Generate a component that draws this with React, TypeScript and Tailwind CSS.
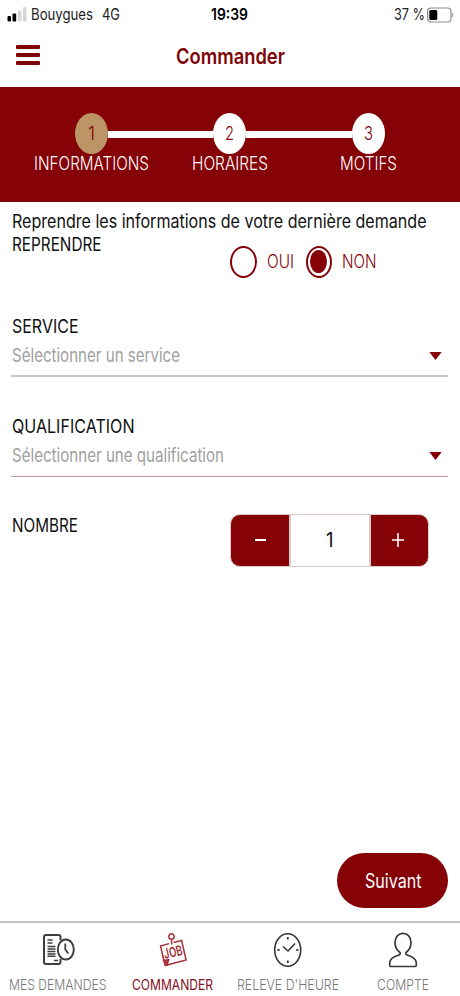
import { useLayoutEffect, useRef, useState } from 'react';

type FitProps = { children: string; w: number; className?: string };

/** Condensed single-line label: squeezes its text horizontally into a box of w pixels. */
function Fit({ children, w, className = '' }: FitProps) {
  const ref = useRef<HTMLSpanElement>(null);
  const [scale, setScale] = useState(1);
  useLayoutEffect(() => {
    if (ref.current) setScale((w - 1) / parseFloat(getComputedStyle(ref.current).width));
  }, [w, children]);
  return (
    <span className={`block shrink-0 pl-[0.5px] ${className}`} style={{ width: w }}>
      <span ref={ref} className="block w-max origin-left whitespace-nowrap" style={{ transform: `scaleX(${scale})` }}>
        {children}
      </span>
    </span>
  );
}

function StatusBar() {
  return (
    <div className="flex h-[29px] items-center pl-[7px] text-[16px] leading-[29px] text-[#222]">
      <svg className="h-[15px] w-[20px] shrink-0" viewBox="0 0 20 15">
        <rect x="0.5" y="9" width="3.5" height="5.5" rx="1" fill="#000" />
        <rect x="5.5" y="6.5" width="3.7" height="8" rx="1" fill="#000" />
        <rect x="11" y="3.5" width="3.5" height="11" rx="1" fill="#d5d5d5" />
        <rect x="16" y="0" width="3.5" height="14.5" rx="1" fill="#d5d5d5" />
      </svg>
      <Fit w={63} className="ml-[3px]">Bouygues</Fit>
      <Fit w={19} className="ml-[8.5px]">4G</Fit>
      <Fit w={38} className="ml-[90px] font-semibold text-black">19:39</Fit>
      <Fit w={32} className="ml-[144.5px]">37 %</Fit>
      <svg className="ml-[1px] h-[16px] w-[28px] shrink-0" viewBox="0 0 28 16">
        <rect x="1.6" y="1" width="23.4" height="14" rx="3.5" fill="none" stroke="#8c8c8c" strokeWidth="1.2" />
        <rect x="3.3" y="3" width="8" height="10" rx="1.5" fill="#000" />
        <path d="M26.3 5.5c1.4.8 1.4 4.2 0 5z" fill="#8c8c8c" />
      </svg>
    </div>
  );
}

function Header() {
  return (
    <header className="flex h-[58px] items-start pl-4 text-[#7f0408]">
      <button aria-label="Menu" className="mt-[16px] flex w-[24px] flex-col gap-1">
        <span className="h-1 w-full rounded-[1px] bg-[#7f0408]" />
        <span className="h-1 w-full rounded-[1px] bg-[#7f0408]" />
        <span className="h-1 w-full rounded-[1px] bg-[#7f0408]" />
      </button>
      <h1 className="ml-[135px] text-[22px] leading-[54px] font-semibold">
        <Fit w={110}>Commander</Fit>
      </h1>
    </header>
  );
}

const steps = [
  { n: '1', label: 'INFORMATIONS', w: 116, active: true },
  { n: '2', label: 'HORAIRES', w: 77, active: false },
  { n: '3', label: 'MOTIFS', w: 58, active: false },
];

function Stepper() {
  return (
    <div className="grid h-[115px] grid-cols-[138px_139px_138px] bg-[#850206] pt-[26px] pl-[22px]">
      {steps.map((s, i) => (
        <div key={s.n} className="flex flex-col items-center">
          <div className="flex w-full items-center">
            <span className={`mt-px h-[7px] flex-1 ${i > 0 ? 'bg-white' : ''}`} />
            <span
              className={`flex h-[41px] w-[33px] items-center justify-center rounded-[50%] pt-px text-[19px] font-light text-[#850206] ${
                s.active ? 'bg-[#bd9466]' : 'bg-white'
              }`}
            >
              <Fit w={s.n === '1' ? 8 : 10}>{s.n}</Fit>
            </span>
            <span className={`mt-px h-[7px] flex-1 ${i < 2 ? 'bg-white' : ''}`} />
          </div>
          <Fit w={s.w} className="text-[18.5px] leading-[18px] font-light text-white">{s.label}</Fit>
        </div>
      ))}
    </div>
  );
}

function Select({ label, w, placeholder, pw, line }: { label: string; w: number; placeholder: string; pw: number; line: string }) {
  return (
    <div className={`h-[61px] ${line}`}>
      <Fit w={w} className="text-[19px] leading-[21px] text-[#111]">{label}</Fit>
      <div className="mt-[8px] flex items-center justify-between pr-[6px] text-[18.5px] leading-[21px] text-[#a0a0a0]">
        <Fit w={pw}>{placeholder}</Fit>
        <svg className="h-[8px] w-[13px]" viewBox="0 0 13 8">
          <path d="M0.3 0h12.4L6.5 8z" fill="#850206" />
        </svg>
      </div>
    </div>
  );
}

function Form() {
  return (
    <main className="flex h-[719px] flex-col pr-[12px] pl-[11px] text-[#111]">
      <Fit w={415.5} className="mt-[9px] text-[18.5px] leading-[21px]">Reprendre les informations de votre dernière demande</Fit>
      <div className="flex h-[46px] items-start">
        <Fit w={90.5} className="mt-[2px] text-[18px] leading-[21px]">REPRENDRE</Fit>
        <div className="mt-[13px] ml-[128px] flex items-center text-[18px] leading-[32px] font-light text-[#850206]">
          <span className="h-[32px] w-[27px] rounded-[50%] border-[2.5px] border-[#850206]" />
          <Fit w={28} className="ml-[10px] pt-px">OUI</Fit>
          <span className="ml-[11px] flex h-[32px] w-[26px] items-center justify-center rounded-[50%] border-[2.5px] border-[#850206]">
            <span className="h-[23px] w-[17px] rounded-[50%] bg-[#850206]" />
          </span>
          <Fit w={35.5} className="ml-[10px] pt-px">NON</Fit>
        </div>
      </div>
      <div className="mt-[38px]">
        <Select label="SERVICE" w={67.5} placeholder="Sélectionner un service" pw={169} line="border-b-2 border-[#c6c6c6]" />
      </div>
      <div className="mt-[39px]">
        <Select label="QUALIFICATION" w={123.5} placeholder="Sélectionner une qualification" pw={213} line="border-b border-[#b9999d]" />
      </div>
      <div className="mt-[37px] flex items-start">
        <Fit w={67} className="mt-[1px] text-[18.5px] leading-[21px]">NOMBRE</Fit>
        <div className="ml-[152px] flex h-[53px] w-[199px] overflow-hidden rounded-[10px] border border-[#ddc9ca] bg-[#850206]">
          <button className="flex w-[58px] items-center justify-center" aria-label="Moins">
            <span className="mb-px h-[2px] w-[11px] bg-white" />
          </button>
          <span className="flex w-[82px] items-center justify-center border-x-2 border-[#d5cccc] bg-white pr-px text-[19.5px]">
            <Fit w={8.5}>1</Fit>
          </span>
          <button className="flex flex-1 items-center justify-center pr-[3px] pb-px" aria-label="Plus">
            <svg className="h-[14px] w-[12px]" viewBox="0 0 12 14">
              <path d="M6 0v14M0 7h12" stroke="#fff" strokeWidth="1.6" />
            </svg>
          </button>
        </div>
      </div>
      <button className="mt-auto mb-[13px] flex h-[55px] w-[111px] items-center justify-center self-end rounded-[28px] bg-[#850206] pt-[3px] pl-px text-[19.5px] text-white">
        <Fit w={57.5}>Suivant</Fit>
      </button>
    </main>
  );
}

function RequestsIcon() {
  return (
    <svg className="h-[34px] w-[34px]" viewBox="0 0 34 34" fill="none" stroke="#3d3d3d">
      <path d="M19.5 7V4q0-2-2-2H5Q3 2 3 4v25q0 2 2 2h12.5q2 0 2-2v-3" strokeWidth="2" />
      <path d="M6.5 7h5M6.5 10h5M6.5 13.5h8M6.5 16h8M6.5 18.5h8M6.5 21h8M6.5 23.2h8M13 27.5h4" strokeWidth="1.5" />
      <ellipse cx="24.8" cy="16.5" rx="8" ry="10" strokeWidth="1.9" />
      <path d="M24.3 10.5v6l3 4" strokeWidth="1.8" />
    </svg>
  );
}

function JobIcon() {
  return (
    <svg className="h-[36px] w-[30px] overflow-visible" viewBox="0 0 30 36" fill="none" stroke="#a8323a" strokeWidth="1.5">
      <ellipse cx="13.5" cy="4.5" rx="2.6" ry="2.8" />
      <path d="M13.5 7.5l.3 5" />
      <path d="M11 11.600L2.500 14l4.600 19.500 21-5.500L23.600 8.500l-8 2.100" />
      <path d="M5.700 28.500l5-.8-1.600 5z" fill="#a8323a" />
      <g transform="rotate(-13 15 20) translate(15 25) scale(0.68 1)">
        <text x="0" y="0" textAnchor="middle" fontSize="14" fontWeight="600" fill="#a8323a" stroke="none">JOB</text>
      </g>
    </svg>
  );
}

function ClockIcon() {
  return (
    <svg className="h-[36px] w-[30px]" viewBox="0 0 30 36" fill="none" stroke="#333" strokeWidth="1.6">
      <ellipse cx="14.7" cy="18" rx="13" ry="16.2" />
      <path d="M10 14.5l5 4.5 7-7.5" />
      <path d="M14.8 5v2.5M14.8 28.5v2.5M4.500 18h2M23.300 18h2" strokeWidth="1.8" />
    </svg>
  );
}

function AccountIcon() {
  return (
    <svg className="h-[36px] w-[30px]" viewBox="0 0 30 36" fill="none" stroke="#3a3a3a" strokeWidth="1.7" strokeLinejoin="round">
      <path d="M12 20.500C8.500 18 7 14.500 7 10.500 7 5 10.500 1.300 15 1.300S23 5 23 10.500c0 4-1.500 7.500-5 10-.8 1.700.3 2.300 2.500 3 4.500 1.500 7.500 3.500 7.800 7v2.800q0 1.200-1.200 1.200H2.900q-1.200 0-1.200-1.200v-2.800c.3-3.500 3.300-5.500 7.800-7 2.200-.7 3.300-1.300 2.500-3z" />
    </svg>
  );
}

const tabs = [
  { label: 'MES DEMANDES', w: 98.5, icon: RequestsIcon, active: false },
  { label: 'COMMANDER', w: 82, icon: JobIcon, active: true },
  { label: "RELEVE D'HEURE", w: 103, icon: ClockIcon, active: false },
  { label: 'COMPTE', w: 53, icon: AccountIcon, active: false },
];

function TabBar() {
  return (
    <nav className="grid h-[75px] grid-cols-4 border-t-2 border-[#c2c2c2] bg-white">
      {tabs.map(({ label, w, icon: Icon, active }) => (
        <div key={label} className="flex flex-col items-center pt-[8px]">
          <div className="flex h-[37px] items-center">
            <Icon />
          </div>
          <Fit w={w} className={`mt-[6px] text-[14.5px] leading-[21px] ${active ? 'text-[#850f1c]' : 'font-light text-[#777]'}`}>
            {label}
          </Fit>
        </div>
      ))}
    </nav>
  );
}

export default function App() {
  return (
    <div className="flex h-[996px] w-[460px] flex-col overflow-hidden bg-white font-['Inter',sans-serif]">
      <StatusBar />
      <Header />
      <Stepper />
      <Form />
      <TabBar />
    </div>
  );
}
